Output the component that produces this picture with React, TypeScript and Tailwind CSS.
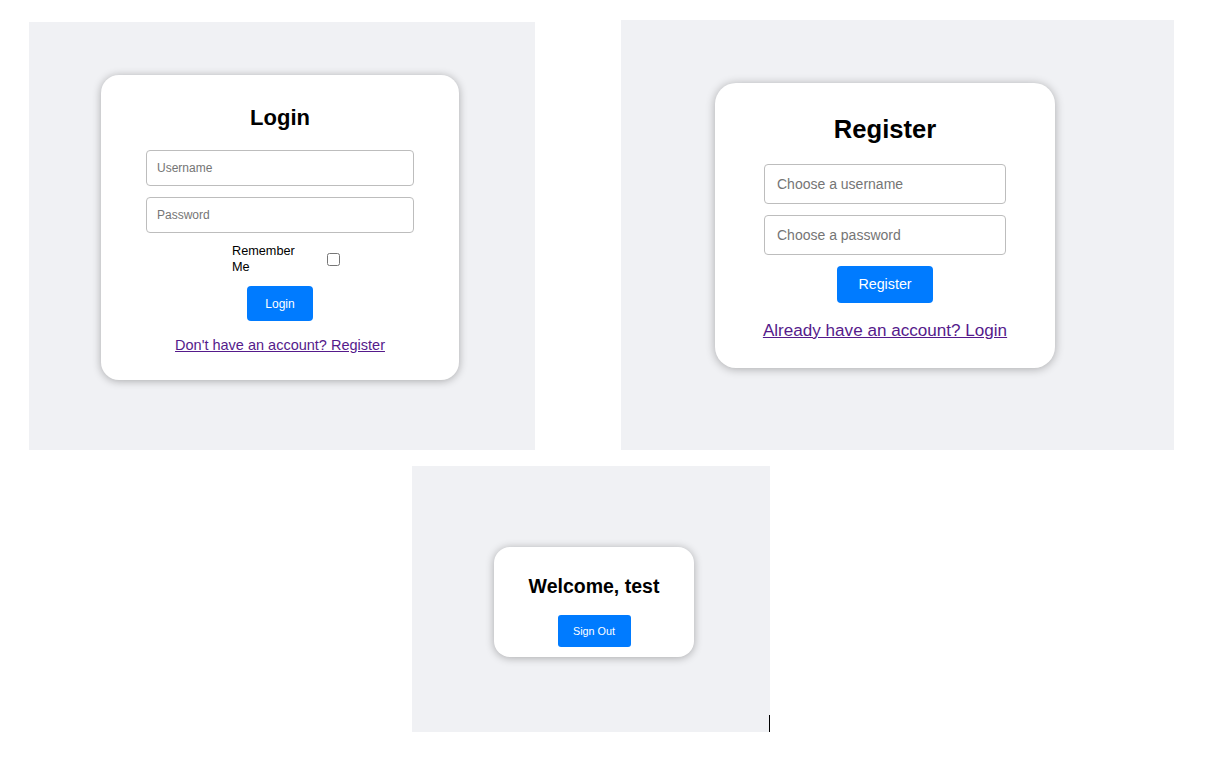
import React from 'react';

const font = { fontFamily: '"Liberation Sans", Arial, sans-serif' };

function LoginCard() {
  return (
    <div className="flex h-[305px] w-[358px] flex-col items-center rounded-[18px] bg-white pt-[30px] shadow-[0_1px_9px_rgba(0,0,0,0.3)]">
      <h2 className="text-[22px] font-bold leading-[25px] text-black">Login</h2>
      <input
        type="text"
        placeholder="Username"
        className="mt-[20px] h-[36px] w-[268px] rounded-[4px] border border-[#bdbdbd] bg-white px-[10px] text-[12px] text-black outline-none placeholder:text-[#757575]"
      />
      <input
        type="password"
        placeholder="Password"
        className="mt-[11px] h-[36px] w-[268px] rounded-[4px] border border-[#bdbdbd] bg-white px-[10px] text-[12px] text-black outline-none placeholder:text-[#757575]"
      />
      <div className="mt-[10px] flex h-[32px] w-full items-center pl-[131px]">
        <label className="w-[80px] text-[12.7px] leading-[16px] text-black">Remember Me</label>
        <input type="checkbox" className="m-0 ml-[15px] h-[13px] w-[13px]" />
      </div>
      <button className="mt-[11px] h-[35px] w-[66px] rounded-[4px] bg-[#007bff] text-[12px] text-white">
        Login
      </button>
      <a href="#" className="mt-[16px] text-[14.5px] leading-[17px] text-[#551a8b] underline">
        Don't have an account? Register
      </a>
    </div>
  );
}

function RegisterCard() {
  return (
    <div className="flex h-[285px] w-[340px] flex-col items-center rounded-[21px] bg-white pt-[32px] shadow-[0_1px_10px_rgba(0,0,0,0.3)]">
      <h2 className="text-[25.6px] font-bold leading-[29px] text-black">Register</h2>
      <input
        type="text"
        placeholder="Choose a username"
        className="mt-[20px] h-[40px] w-[242px] rounded-[4px] border border-[#bdbdbd] bg-white px-[12px] text-[14px] text-black outline-none placeholder:text-[#757575]"
      />
      <input
        type="password"
        placeholder="Choose a password"
        className="mt-[11px] h-[40px] w-[242px] rounded-[4px] border border-[#bdbdbd] bg-white px-[12px] text-[14px] text-black outline-none placeholder:text-[#757575]"
      />
      <button className="mt-[11px] h-[37px] w-[96px] rounded-[4px] bg-[#007bff] text-[14.3px] text-white">
        Register
      </button>
      <a href="#" className="mt-[18px] text-[17.1px] leading-[20px] text-[#551a8b] underline">
        Already have an account? Login
      </a>
    </div>
  );
}

function WelcomeCard() {
  return (
    <div className="flex h-[110px] w-[200px] flex-col items-center rounded-[16px] bg-white pt-[28px] shadow-[0_1px_8px_rgba(0,0,0,0.3)]">
      <h2 className="text-[19.5px] font-bold leading-[22px] text-black">Welcome, test</h2>
      <button className="mt-[18px] h-[32px] w-[73px] rounded-[3px] bg-[#007bff] text-[10.8px] text-white">
        Sign Out
      </button>
    </div>
  );
}

export default function App() {
  return (
    <div className="h-[771px] w-[1211px] overflow-hidden bg-white" style={font}>
      {/* top row: login + register screens */}
      <div className="flex items-start">
        <div className="ml-[29px] mt-[22px] h-[428px] w-[506px] bg-[#f0f1f4] pl-[72px] pt-[53px]">
          <LoginCard />
        </div>
        <div className="ml-[86px] mt-[20px] h-[430px] w-[553px] bg-[#f0f1f4] pl-[94px] pt-[63px]">
          <RegisterCard />
        </div>
      </div>

      {/* bottom: welcome screen */}
      <div className="relative ml-[412px] mt-[16px] h-[266px] w-[358px] bg-[#f0f1f4] pl-[82px] pt-[81px]">
        <WelcomeCard />
        <span className="absolute bottom-0 right-0 h-[17px] w-px bg-black" />
      </div>
    </div>
  );
}
